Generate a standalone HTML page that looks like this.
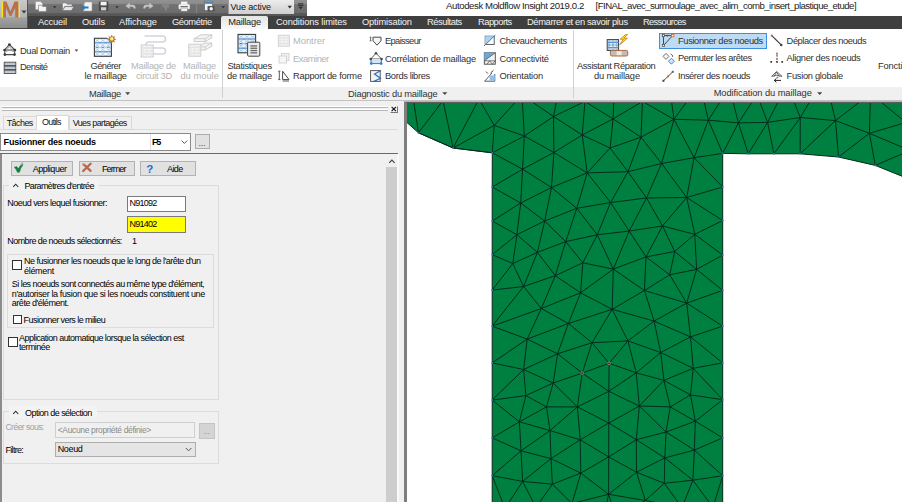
<!DOCTYPE html><html><head><meta charset="utf-8"><title>Autodesk Moldflow Insight</title><style>
html,body{margin:0;padding:0;}body{width:902px;height:502px;position:relative;overflow:hidden;background:#fff;font-family:"Liberation Sans",sans-serif;}
.t{position:absolute;white-space:nowrap;line-height:16px;height:16px;}
</style></head><body>
<div style="position:absolute;left:0px;top:0px;width:902px;height:14px;background:#ffffff;"></div>
<div style="position:absolute;left:28px;top:0px;width:279px;height:16px;background:linear-gradient(#929292 0,#8a8a8a 4px,#727272 4.6px,#6c6c6c 13px,#5a5a5a 13.5px,#555 16px);"></div>
<div style="position:absolute;left:307px;top:0px;width:595px;height:14px;background:#ffffff;"></div>
<div style="position:absolute;left:0px;top:15.5px;width:902px;height:13.3px;background:#3f3f3f;"></div>
<div style="position:absolute;left:0px;top:0px;width:28.4px;height:28.6px;background:linear-gradient(#c8c8c8 0,#b4b4b4 17px,#a2a2a2 17.6px,#8c8c8c 28px);border-right:1px solid #555;border-bottom:1px solid #444;box-sizing:border-box;"></div>
<div style="position:absolute;left:221px;top:16px;width:47px;height:13.2px;background:linear-gradient(#e4e4e4,#f8f8f8);border-radius:2px 2px 0 0;"></div>
<div style="position:absolute;left:227.8px;top:0px;width:65.4px;height:13.9px;background:linear-gradient(#ececec,#cfcfcf);border-left:1px solid #9a9a9a;"></div>
<div style="position:absolute;left:0px;top:28.8px;width:902px;height:58.2px;background:#ffffff;"></div>
<div style="position:absolute;left:0px;top:87px;width:902px;height:13px;background:#f0f0f0;"></div>
<div style="position:absolute;left:0px;top:100px;width:902px;height:1px;background:#c2c2c2;"></div>
<div style="position:absolute;left:221.5px;top:30px;width:1px;height:68px;background:#d0d0d0;"></div>
<div style="position:absolute;left:572.5px;top:30px;width:1px;height:68px;background:#d0d0d0;"></div>
<div style="position:absolute;left:659.3px;top:32.7px;width:107.3px;height:16px;background:#bedbf4;border:1px solid #3f8fe0;box-sizing:border-box;"></div>
<div style="position:absolute;left:0px;top:101px;width:404px;height:401px;background:#f0f0f0;"></div>
<div style="position:absolute;left:403.6px;top:101px;width:0.8px;height:401px;background:#b8b8b8;"></div>
<div style="position:absolute;left:404.2px;top:101px;width:2.8px;height:401px;background:#7e7e7e;"></div>
<div style="position:absolute;left:407px;top:101px;width:495px;height:401px;background:#ffffff;"></div>
<div style="position:absolute;left:404px;top:101px;width:498px;height:1px;background:#b4b4b4;"></div>
<div style="position:absolute;left:405.5px;top:101.7px;width:496.5px;height:1px;background:#5e5e5e;"></div>
<div style="position:absolute;left:1.5px;top:106px;width:386.5px;height:1px;background:#fff;"></div>
<div style="position:absolute;left:1.5px;top:107px;width:386.5px;height:1px;background:#b6b6b6;"></div>
<div style="position:absolute;left:1.5px;top:109.4px;width:386.5px;height:1px;background:#fff;"></div>
<div style="position:absolute;left:1.5px;top:110.4px;width:386.5px;height:1px;background:#b6b6b6;"></div>
<div style="position:absolute;left:390px;top:105.6px;width:8px;height:7.4px;background:#f0f0f0;border-right:1px solid #777;border-bottom:1px solid #777;border-left:1px solid #fff;border-top:1px solid #fff;box-sizing:border-box;"></div>
<div style="position:absolute;left:0px;top:129px;width:398px;height:1px;background:#dcdcdc;"></div>
<div style="position:absolute;left:2.6px;top:116.2px;width:34px;height:14px;background:#f0f0f0;border:1px solid #d9d9d9;box-sizing:border-box;"></div>
<div style="position:absolute;left:69px;top:116.2px;width:62.5px;height:14px;background:#f0f0f0;border:1px solid #d9d9d9;box-sizing:border-box;"></div>
<div style="position:absolute;left:36.2px;top:114.6px;width:33px;height:15.4px;background:#ffffff;border:1px solid #d9d9d9;box-sizing:border-box;border-bottom:none;"></div>
<div style="position:absolute;left:0px;top:133px;width:190.5px;height:17.6px;background:#ffffff;border:1px solid #8a8a8a;box-sizing:border-box;"></div>
<div style="position:absolute;left:150px;top:134px;width:1px;height:15.6px;background:#e0e0e0;"></div>
<div style="position:absolute;left:194.5px;top:134px;width:15px;height:15px;background:#e1e1e1;border:1px solid #adadad;box-sizing:border-box;"></div>
<div style="position:absolute;left:0px;top:153px;width:398px;height:1px;background:#696969;"></div>
<div style="position:absolute;left:0px;top:154px;width:1.6px;height:348px;background:#8c8c8c;"></div>
<div style="position:absolute;left:386px;top:154px;width:12px;height:348px;background:#f0f0f0;"></div>
<div style="position:absolute;left:386px;top:167px;width:11.3px;height:335px;background:#cdcdcd;"></div>
<div style="position:absolute;left:397.3px;top:154px;width:2.2px;height:348px;background:#f9f9f9;"></div>
<div style="position:absolute;left:11px;top:161.3px;width:62.2px;height:14.5px;background:#e1e1e1;border:1px solid #b2b2b2;box-sizing:border-box;"></div>
<div style="position:absolute;left:79.3px;top:161.3px;width:56.2px;height:14.5px;background:#e1e1e1;border:1px solid #b2b2b2;box-sizing:border-box;"></div>
<div style="position:absolute;left:140.2px;top:161.3px;width:56.2px;height:14.5px;background:#e1e1e1;border:1px solid #b2b2b2;box-sizing:border-box;"></div>
<div style="position:absolute;left:3px;top:184.6px;width:216px;height:215px;border:1px solid #dcdcdc;box-sizing:border-box;"></div>
<div style="position:absolute;left:9px;top:179px;width:90px;height:12px;background:#f3f3f3;"></div>
<div style="position:absolute;left:127px;top:195.5px;width:58.5px;height:16px;background:#fff;border:1px solid #7a7a7a;box-sizing:border-box;"></div>
<div style="position:absolute;left:127px;top:216px;width:58.5px;height:17px;background:#ffff00;border:1px solid #7a7a7a;box-sizing:border-box;"></div>
<div style="position:absolute;left:12px;top:260px;width:9.5px;height:9.5px;background:#fff;border:1px solid #333;box-sizing:border-box;"></div>
<div style="position:absolute;left:12.7px;top:314.5px;width:9.5px;height:9.5px;background:#fff;border:1px solid #333;box-sizing:border-box;"></div>
<div style="position:absolute;left:6.8px;top:254.4px;width:206.8px;height:73.4px;border:1px solid #dcdcdc;box-sizing:border-box;"></div>
<div style="position:absolute;left:8px;top:337px;width:9.5px;height:9.5px;background:#fff;border:1px solid #333;box-sizing:border-box;"></div>
<div style="position:absolute;left:3px;top:411.2px;width:216px;height:53.2px;border:1px solid #dcdcdc;box-sizing:border-box;"></div>
<div style="position:absolute;left:9px;top:406px;width:88px;height:12px;background:#f3f3f3;"></div>
<div style="position:absolute;left:55px;top:421.6px;width:139.6px;height:16.4px;background:#f0f0f0;border:1px solid #cfcfcf;box-sizing:border-box;"></div>
<div style="position:absolute;left:199px;top:422.7px;width:15.5px;height:16px;background:#d4d4d4;border:1px solid #c4c4c4;box-sizing:border-box;"></div>
<div style="position:absolute;left:54.5px;top:442px;width:141.5px;height:15px;background:#e5e5e5;border:1px solid #adadad;box-sizing:border-box;"></div>
<svg style="position:absolute;left:407px;top:102.5px" width="495" height="399.5" viewBox="407 102.5 495 399.5">
<path d="M398.0,114.0 L418.5,132.3 L453.1,147.5 L492.3,152.3 L492.2,186.5 L492.2,220.5 L492.2,254.2 L492.2,289.6 L492.2,325.7 L492.2,362.4 L492.2,399.6 L492.2,437.4 L492.2,475.2 L492.2,512.0 L722.7,512.0 L722.7,475.2 L722.7,437.4 L722.7,399.2 L722.7,362.4 L722.7,325.7 L722.7,289.9 L722.7,254.6 L722.7,220.0 L722.7,186.5 L722.7,152.9 L748.3,153.3 L773.9,153.3 L800.1,153.3 L838.5,156.5 L875.3,164.9 L915.0,181.0 L915,90 L398,90 Z" fill="#008040" stroke="#02281a" stroke-width="1.0"/>
<path d="M418.5,132.3L453.1,147.5M453.1,147.5L492.3,152.3M492.3,152.3L494.2,124.9M494.2,124.9L524.3,135.5M494.2,124.9L453.1,147.5M492.3,152.3L524.3,135.5M524.3,135.5L553.5,116.0M524.3,135.5L553.9,152.0M524.3,135.5L522.6,168.7M492.3,152.3L522.6,168.7M522.6,168.7L553.9,152.0M522.6,168.7L492.2,186.5M553.5,116.0L553.9,152.0M418.5,132.3L412.0,90.0M418.5,132.3L443.0,100.0M453.1,147.5L443.0,100.0M453.1,147.5L479.0,98.5M494.2,124.9L479.0,98.5M494.2,124.9L522.0,94.5M524.3,135.5L522.0,94.5M553.5,116.0L522.0,94.5M553.5,116.0L557.5,96.0M553.5,116.0L585.0,101.0M585.0,101.0L582.2,134.5M585.0,101.0L613.1,118.4M613.1,118.4L614.0,95.0M613.1,118.4L642.5,101.0M642.5,101.0L641.0,136.7M642.5,101.0L674.0,118.8M674.0,118.8L671.0,97.0M674.0,118.8L700.0,83.0M708.4,119.7L700.0,83.0M708.4,119.7L729.5,86.5M738.4,122.4L729.5,86.5M738.4,122.4L757.0,94.0M767.6,121.9L757.0,94.0M767.6,121.9L787.0,84.0M800.3,117.0L787.0,84.0M800.3,117.0L825.0,76.0M835.5,120.1L825.0,76.0M835.5,120.1L870.6,93.0M869.4,132.8L870.6,93.0M870.6,93.0L906.0,122.0M869.4,132.8L906.0,122.0M869.4,132.8L910.0,150.0M875.3,164.9L910.0,150.0M553.5,116.0L582.2,134.5M582.2,134.5L613.1,118.4M582.2,134.5L610.1,147.5M582.2,134.5L553.9,152.0M582.2,134.5L587.2,172.4M613.1,118.4L641.0,136.7M613.1,118.4L610.1,147.5M641.0,136.7L610.1,147.5M641.0,136.7L674.0,118.8M641.0,136.7L661.6,163.0M641.0,136.7L628.0,171.2M610.1,147.5L587.2,172.4M610.1,147.5L628.0,171.2M587.2,172.4L628.0,171.2M628.0,171.2L661.6,163.0M661.6,163.0L694.1,157.2M674.0,118.8L694.1,157.2M674.0,118.8L661.6,163.0M553.9,152.0L587.2,172.4M674.0,118.8L708.4,119.7M708.4,119.7L738.4,122.4M738.4,122.4L767.6,121.9M767.6,121.9L800.3,117.0M800.3,117.0L835.5,120.1M708.4,119.7L694.1,157.2M708.4,119.7L722.7,152.9M738.4,122.4L722.7,152.9M738.4,122.4L748.3,153.3M767.6,121.9L748.3,153.3M767.6,121.9L773.9,153.3M800.3,117.0L773.9,153.3M800.3,117.0L800.1,153.3M800.1,153.3L835.5,120.1M694.1,157.2L722.7,152.9M694.1,157.2L722.7,186.5M835.5,120.1L838.5,156.5M835.5,120.1L869.4,132.8M838.5,156.5L869.4,132.8M869.4,132.8L875.3,164.9M522.6,168.7L551.5,187.0M522.6,168.7L520.7,202.5M553.9,152.0L551.5,187.0M551.5,187.0L587.2,172.4M551.5,187.0L520.7,202.5M551.5,187.0L576.8,207.8M551.5,187.0L544.7,220.5M587.2,172.4L576.8,207.8M587.2,172.4L610.6,202.0M628.0,171.2L610.6,202.0M576.8,207.8L610.6,202.0M576.8,207.8L544.7,220.5M576.8,207.8L597.3,234.3M610.6,202.0L597.3,234.3M610.6,202.0L629.2,230.5M492.2,186.5L520.7,202.5M520.7,202.5L492.2,220.5M520.7,202.5L544.7,220.5M520.7,202.5L516.9,234.2M492.2,220.5L516.9,234.2M544.7,220.5L516.9,234.2M628.0,171.2L646.5,197.5M661.6,163.0L646.5,197.5M661.6,163.0L686.7,197.0M694.1,157.2L686.7,197.0M686.7,197.0L722.7,186.5M610.6,202.0L646.5,197.5M646.5,197.5L686.7,197.0M646.5,197.5L629.2,230.5M646.5,197.5L662.5,225.5M686.7,197.0L662.5,225.5M686.7,197.0L722.7,220.0M686.7,197.0L694.8,233.8M662.5,225.5L694.8,233.8M694.8,233.8L722.7,220.0M629.2,230.5L662.5,225.5M597.3,234.3L629.2,230.5M516.9,234.2L492.2,254.2M516.9,234.2L512.8,263.0M516.9,234.2L537.4,251.9M492.2,254.2L512.8,263.0M512.8,263.0L537.4,251.9M512.8,263.0L523.6,286.0M512.8,263.0L492.2,289.6M537.4,251.9L565.7,241.1M537.4,251.9L555.3,275.2M537.4,251.9L523.6,286.0M544.7,220.5L537.4,251.9M544.7,220.5L565.7,241.1M565.7,241.1L576.8,207.8M565.7,241.1L597.3,234.3M565.7,241.1L582.8,262.3M565.7,241.1L555.3,275.2M597.3,234.3L582.8,262.3M597.3,234.3L613.3,268.6M629.2,230.5L613.3,268.6M582.8,262.3L555.3,275.2M582.8,262.3L613.3,268.6M582.8,262.3L580.6,292.3M613.3,268.6L580.6,292.3M613.3,268.6L612.2,308.8M613.3,268.6L644.4,290.0M555.3,275.2L580.6,292.3M555.3,275.2L523.6,286.0M555.3,275.2L541.3,308.0M523.6,286.0L492.2,289.6M523.6,286.0L541.3,308.0M580.6,292.3L541.3,308.0M580.6,292.3L612.2,308.8M629.2,230.5L646.0,256.4M662.5,225.5L646.0,256.4M662.5,225.5L674.7,251.0M694.8,233.8L674.7,251.0M694.8,233.8L722.7,254.6M694.8,233.8L696.6,268.9M646.0,256.4L674.7,251.0M674.7,251.0L696.6,268.9M674.7,251.0L669.7,274.3M646.0,256.4L669.7,274.3M646.0,256.4L613.3,268.6M646.0,256.4L644.4,290.0M669.7,274.3L644.4,290.0M669.7,274.3L696.6,268.9M669.7,274.3L686.7,302.6M696.6,268.9L722.7,254.6M696.6,268.9L722.7,289.9M696.6,268.9L686.7,302.6M686.7,302.6L722.7,289.9M686.7,302.6L644.4,290.0M644.4,290.0L612.2,308.8M541.3,308.0L492.2,325.7M541.3,308.0L568.4,323.0M541.3,308.0L527.2,338.6M612.2,308.8L568.4,323.0M612.2,308.8L592.0,342.2M612.2,308.8L627.9,340.4M492.2,325.7L527.2,338.6M568.4,323.0L527.2,338.6M568.4,323.0L592.0,342.2M568.4,323.0L557.6,353.3M527.2,338.6L557.6,353.3M527.2,338.6L492.2,362.4M527.2,338.6L523.6,369.0M592.0,342.2L627.9,340.4M592.0,342.2L557.6,353.3M592.0,342.2L609.1,362.8M592.0,342.2L582.2,372.6M627.9,340.4L609.1,362.8M627.9,340.4L636.2,372.3M557.6,353.3L523.6,369.0M557.6,353.3L582.2,372.6M557.6,353.3L553.2,382.5M492.2,362.4L523.6,369.0M609.1,362.8L582.2,372.6M609.1,362.8L636.2,372.3M523.6,369.0L553.2,382.5M582.2,372.6L553.2,382.5M523.6,286.0L492.2,325.7M580.6,292.3L568.4,323.0M612.2,308.8L654.1,320.6M686.7,302.6L654.1,320.6M686.7,302.6L722.7,325.7M686.7,302.6L690.5,336.4M654.1,320.6L690.5,336.4M654.1,320.6L660.7,352.0M654.1,320.6L627.9,340.4M644.4,290.0L654.1,320.6M690.5,336.4L722.7,325.7M690.5,336.4L660.7,352.0M690.5,336.4L722.7,362.4M690.5,336.4L693.2,367.8M660.7,352.0L627.9,340.4M660.7,352.0L636.2,372.3M660.7,352.0L693.2,367.8M660.7,352.0L663.9,379.9M636.2,372.3L663.9,379.9M693.2,367.8L722.7,362.4M693.2,367.8L663.9,379.9M553.2,382.5L525.9,395.1M553.2,382.5L546.5,406.4M553.2,382.5L577.4,406.4M492.2,399.6L525.9,395.1M492.2,399.6L519.4,421.3M523.6,369.0L492.2,399.6M523.6,369.0L525.9,395.1M525.9,395.1L546.5,406.4M525.9,395.1L519.4,421.3M546.5,406.4L577.4,406.4M546.5,406.4L519.4,421.3M546.5,406.4L550.0,430.1M577.4,406.4L550.0,430.1M577.4,406.4L608.8,390.8M577.4,406.4L608.8,422.5M577.4,406.4L580.2,439.3M582.2,372.6L577.4,406.4M609.1,362.8L608.8,390.8M582.2,372.6L608.8,390.8M636.2,372.3L608.8,390.8M608.8,390.8L639.3,405.5M608.8,390.8L608.8,422.5M639.3,405.5L608.8,422.5M639.3,405.5L636.3,439.2M636.2,372.3L639.3,405.5M519.4,421.3L550.0,430.1M519.4,421.3L492.2,437.4M519.4,421.3L521.0,450.3M550.0,430.1L580.2,439.3M550.0,430.1L521.0,450.3M550.0,430.1L551.0,458.1M608.8,422.5L580.2,439.3M608.8,422.5L636.3,439.2M608.8,422.5L608.7,456.4M492.2,437.4L521.0,450.3M580.2,439.3L551.0,458.1M580.2,439.3L608.7,456.4M636.3,439.2L608.7,456.4M521.0,450.3L551.0,458.1M663.9,379.9L639.3,405.5M663.9,379.9L670.2,406.4M663.9,379.9L690.5,394.4M690.5,394.4L670.2,406.4M690.5,394.4L722.7,399.2M690.5,394.4L695.3,420.7M693.2,367.8L690.5,394.4M693.2,367.8L722.7,399.2M639.3,405.5L670.2,406.4M639.3,405.5L666.1,431.5M670.2,406.4L695.3,420.7M670.2,406.4L666.1,431.5M695.3,420.7L722.7,399.2M695.3,420.7L666.1,431.5M695.3,420.7L722.7,437.4M695.3,420.7L694.4,449.6M666.1,431.5L636.3,439.2M666.1,431.5L694.4,449.6M666.1,431.5L664.8,457.4M636.3,439.2L664.8,457.4M694.4,449.6L722.7,437.4M694.4,449.6L664.8,457.4M521.0,450.3L492.2,475.2M521.0,450.3L522.6,480.9M551.0,458.1L522.6,480.9M551.0,458.1L552.4,483.7M551.0,458.1L580.8,472.6M580.2,439.3L580.8,472.6M608.7,456.4L580.8,472.6M608.7,456.4L608.6,493.8M608.7,456.4L636.5,471.7M636.3,439.2L636.5,471.7M492.2,475.2L522.6,480.9M522.6,480.9L552.4,483.7M552.4,483.7L580.8,472.6M580.8,472.6L608.6,493.8M636.5,471.7L608.6,493.8M694.4,449.6L722.7,475.2M694.4,449.6L692.9,479.7M664.8,457.4L692.9,479.7M664.8,457.4L664.3,482.8M664.8,457.4L636.5,471.7M636.5,471.7L664.3,482.8M636.5,471.7L645.3,500.0M664.3,482.8L692.9,479.7M664.3,482.8L645.3,500.0M692.9,479.7L722.7,475.2M608.6,493.8L645.3,500.0M522.6,480.9L505.0,508.0M492.2,475.2L505.0,508.0M522.6,480.9L536.0,507.0M552.4,483.7L536.0,507.0M552.4,483.7L572.0,503.0M580.8,472.6L572.0,503.0M608.6,493.8L572.0,503.0M608.6,493.8L603.0,520.0M608.6,493.8L617.0,520.0M645.3,500.0L617.0,520.0M664.3,482.8L682.0,507.0M692.9,479.7L682.0,507.0M692.9,479.7L713.0,507.0M722.7,475.2L713.0,507.0M645.3,500.0L682.0,507.0" fill="none" stroke="#02281a" stroke-width="0.95"/>
<g fill="#2a86c8" opacity="0.8"><circle cx="418.5" cy="132.3" r="1.1"/><circle cx="453.1" cy="147.5" r="1.1"/><circle cx="492.3" cy="152.3" r="1.1"/><circle cx="492.2" cy="186.5" r="1.1"/><circle cx="492.2" cy="220.5" r="1.1"/><circle cx="492.2" cy="254.2" r="1.1"/><circle cx="492.2" cy="289.6" r="1.1"/><circle cx="492.2" cy="325.7" r="1.1"/><circle cx="492.2" cy="362.4" r="1.1"/><circle cx="492.2" cy="399.6" r="1.1"/><circle cx="492.2" cy="437.4" r="1.1"/><circle cx="492.2" cy="475.2" r="1.1"/><circle cx="722.7" cy="475.2" r="1.1"/><circle cx="722.7" cy="437.4" r="1.1"/><circle cx="722.7" cy="399.2" r="1.1"/><circle cx="722.7" cy="362.4" r="1.1"/><circle cx="722.7" cy="325.7" r="1.1"/><circle cx="722.7" cy="289.9" r="1.1"/><circle cx="722.7" cy="254.6" r="1.1"/><circle cx="722.7" cy="220.0" r="1.1"/><circle cx="722.7" cy="186.5" r="1.1"/><circle cx="722.7" cy="152.9" r="1.1"/><circle cx="748.3" cy="153.3" r="1.1"/><circle cx="773.9" cy="153.3" r="1.1"/><circle cx="800.1" cy="153.3" r="1.1"/><circle cx="838.5" cy="156.5" r="1.1"/><circle cx="875.3" cy="164.9" r="1.1"/></g>
<circle cx="609.1" cy="362.8" r="1.3" fill="none" stroke="#e08a8a" stroke-width="0.7"/>
<circle cx="582.2" cy="372.6" r="1.3" fill="none" stroke="#e08a8a" stroke-width="0.7"/>
</svg>
<svg style="position:absolute;left:0;top:0" width="902" height="502" viewBox="0 0 902 502">
<path d="M3.2,1.5 L6.5,1.5 L10.5,11.5 L14.5,1.5 L18.5,1.5 L18.5,17.5 L15.2,17.5 L15.2,8 L11.3,16 L9.7,16 L6,8 L6,17.5 L3.2,17.5 Z" fill="#b87052"/>
<path d="M2.3,1.5 L2.3,17.5 M19.3,1.5 L19.3,17.5" stroke="#ffe800" stroke-width="1.3"/>
<path d="M21.5,10.5 L26.5,10.5 L24,13.5 Z" fill="#3a3a3a"/>
<path d="M35.5,1.5 h5 l2,2 v6 h-7 Z" fill="#f2f2f2" stroke="#999" stroke-width="0.5"/>
<path d="M38.5,5.2 h3 l1,1.2 h3.8 v5.2 h-7.8 Z" fill="#f2f2f2" stroke="#777" stroke-width="0.6"/>
<path d="M52.8,6.2 h3.6 l-1.8,2 Z" fill="#2e2e2e"/>
<path d="M62.5,3 h3.5 l1,1.2 h5 v2 h-7.2 l-2.3,4.3 Z" fill="#f2f2f2" stroke="#777" stroke-width="0.5"/>
<path d="M65,6.6 h9 l-2.6,4 h-9 Z" fill="#dfe6ee" stroke="#666" stroke-width="0.6"/>
<path d="M85,2 h7 v9 h-8.5 v-5.5 Z" fill="#f2f2f2" stroke="#999" stroke-width="0.5"/>
<path d="M81.2,7.5 l3.3,-2.6 v1.7 h4 v1.9 h-4 v1.7 Z" fill="#1f78c8"/>
<rect x="98.8" y="1.5" width="9.6" height="9.6" rx="1" fill="#4a4a4a"/>
<rect x="100.6" y="1.8" width="6" height="3.6" fill="#f2f2f2"/><rect x="101" y="7.2" width="5.2" height="3.2" fill="#d0d0d0"/>
<path d="M115.2,6.2 h3.6 l-1.8,2 Z" fill="#2e2e2e"/>
<path d="M125.5,6 l4.2,-3.2 v2 h3 q3,0 3,3.8 h-2 q0,-1.8 -1.6,-1.8 h-2.4 v2.2 Z" fill="#c4c4c4"/>
<path d="M153.5,6 l-4.2,-3.2 v2 h-3 q-3,0 -3,3.8 h2 q0,-1.8 1.6,-1.8 h2.4 v2.2 Z" fill="#c4c4c4"/>
<path d="M161.5,5.5 l3.5,-3 v2 h4 v3 h-2 v3 h-2 v-4 h-0.5 v2 Z" fill="#868686"/>
<rect x="181" y="1.6" width="6.4" height="3" fill="#f2f2f2"/><rect x="178.6" y="4.2" width="11.2" height="5" rx="1.2" fill="#f2f2f2"/><rect x="181" y="8" width="6.4" height="3.2" fill="#f2f2f2" stroke="#777" stroke-width="0.5"/><rect x="180.5" y="6.2" width="7.4" height="0.9" fill="#555"/>
<rect x="196.3" y="4" width="0.8" height="9.5" fill="#8e8e8e"/>
<rect x="204.5" y="1.2" width="8" height="9.5" fill="#f2f2f2" stroke="#555" stroke-width="0.6"/><rect x="205" y="1.8" width="7" height="2" fill="#3b86d0"/>
<rect x="207.5" y="6" width="7.2" height="5.4" rx="0.8" fill="#555"/><circle cx="211.2" cy="8.8" r="1.7" fill="#f2f2f2"/>
<path d="M221.4,6.2 h3.6 l-1.8,2 Z" fill="#2e2e2e"/>
<path d="M287.6,5.8 h4.4 l-2.2,2.6 Z" fill="#333"/>
<path d="M298,3.8 h5.4 M298,5.4 h5.4" stroke="#2a2a2a" stroke-width="0.9"/><path d="M298.4,6.8 h4.6 l-2.3,2.5 Z" fill="#2a2a2a"/>
<path d="M74.6,49.6 h3.6 l-1.8,2.1 Z" fill="#444"/>
<path d="M125.2,92.2 h5 l-2.5,2.8 Z" fill="#444"/>
<path d="M442.3,92.2 h5 l-2.5,2.8 Z" fill="#444"/>
<path d="M817.2,92.2 h5 l-2.5,2.8 Z" fill="#444"/>
<path d="M9.4,44.6 L4.6,50 L14.9,50 Z M4.6,50 L4.9,54.6 L14.5,54.6 L14.9,50" fill="none" stroke="#4a4a4a" stroke-width="1.1"/>
<path d="M5.5,51.6 q4.2,-3 8.6,0 M6.6,50 l2.8,-3.4 l2.8,3.4" fill="none" stroke="#8a8a8a" stroke-width="0.8"/>
<circle cx="9.4" cy="44.6" r="1.35" fill="#3a3a3a"/>
<circle cx="4.6" cy="50" r="1.35" fill="#3a3a3a"/>
<circle cx="14.9" cy="50" r="1.35" fill="#3a3a3a"/>
<circle cx="4.9" cy="54.6" r="1.35" fill="#3a3a3a"/>
<circle cx="14.5" cy="54.6" r="1.35" fill="#3a3a3a"/>
<rect x="4.2" y="62.2" width="11.6" height="3.3" fill="#cfdbe6" stroke="#4a4a4a" stroke-width="0.9"/>
<path d="M5,63.900000000000006 h10" stroke="#7c8894" stroke-width="0.7" stroke-dasharray="1.3,0.9"/>
<rect x="4.2" y="66.2" width="11.6" height="3.3" fill="#cfdbe6" stroke="#4a4a4a" stroke-width="0.9"/>
<path d="M5,67.9 h10" stroke="#7c8894" stroke-width="0.7" stroke-dasharray="1.3,0.9"/>
<rect x="4.2" y="70.2" width="11.6" height="3.3" fill="#cfdbe6" stroke="#4a4a4a" stroke-width="0.9"/>
<path d="M5,71.9 h10" stroke="#7c8894" stroke-width="0.7" stroke-dasharray="1.3,0.9"/>
<rect x="94.4" y="38.3" width="17" height="18" fill="#f4f8fc" stroke="#3a3a3a" stroke-width="1.1"/>
<path d="M94.4,38.3L100.1,42.8M100.1,38.3L94.4,42.8M100.1,38.3L105.7,42.8M105.7,38.3L100.1,42.8M105.7,38.3L111.4,42.8M111.4,38.3L105.7,42.8M94.4,42.8L100.1,47.3M100.1,42.8L94.4,47.3M100.1,42.8L105.7,47.3M105.7,42.8L100.1,47.3M105.7,42.8L111.4,47.3M111.4,42.8L105.7,47.3M94.4,47.3L100.1,51.8M100.1,47.3L94.4,51.8M100.1,47.3L105.7,51.8M105.7,47.3L100.1,51.8M105.7,47.3L111.4,51.8M111.4,47.3L105.7,51.8M94.4,51.8L100.1,56.3M100.1,51.8L94.4,56.3M100.1,51.8L105.7,56.3M105.7,51.8L100.1,56.3M105.7,51.8L111.4,56.3M111.4,51.8L105.7,56.3" stroke="#3b7fc4" stroke-width="0.5" opacity="0.55" fill="none"/>
<path d="M94.4,42.8 h17" stroke="#3b7fc4" stroke-width="0.95"/>
<path d="M94.4,47.3 h17" stroke="#3b7fc4" stroke-width="1.1" stroke-dasharray="2.8,2.8" stroke-dashoffset="-1.4"/>
<path d="M94.4,51.8 h17" stroke="#3b7fc4" stroke-width="0.95"/>
<path d="M106.5,37 h6.5 v6.5 Z" fill="#fff"/>
<path d="M111.8,34.6 l1,2.3 2.3,-1 -1,2.3 2.3,1 -2.3,1 1,2.3 -2.3,-1 -1,2.3 -1,-2.3 -2.3,1 1,-2.3 -2.3,-1 2.3,-1 -1,-2.3 2.3,1 Z" fill="#b96a1e"/>
<circle cx="111.8" cy="38.9" r="1.8" fill="#fff03a"/><circle cx="112.3" cy="38.9" r="0.7" fill="#fff"/>
<path d="M144.5,36 h18 q3,0 3,3 t-3,3 h-14 q-2.5,0 -2.5,3 t2.5,3 h14 q3,0 3,3 t-3,3 h-10" fill="none" stroke="#d2d5da" stroke-width="1.6"/>
<rect x="141.2" y="45" width="12" height="12" fill="#f6f6f6" stroke="#c9c9c9" stroke-width="0.9"/>
<path d="M141.2,45.0L145.2,48.0M145.2,45.0L141.2,48.0M145.2,45.0L149.2,48.0M149.2,45.0L145.2,48.0M149.2,45.0L153.2,48.0M153.2,45.0L149.2,48.0M141.2,48.0L145.2,51.0M145.2,48.0L141.2,51.0M145.2,48.0L149.2,51.0M149.2,48.0L145.2,51.0M149.2,48.0L153.2,51.0M153.2,48.0L149.2,51.0M141.2,51.0L145.2,54.0M145.2,51.0L141.2,54.0M145.2,51.0L149.2,54.0M149.2,51.0L145.2,54.0M149.2,51.0L153.2,54.0M153.2,51.0L149.2,54.0M141.2,54.0L145.2,57.0M145.2,54.0L141.2,57.0M145.2,54.0L149.2,57.0M149.2,54.0L145.2,57.0M149.2,54.0L153.2,57.0M153.2,54.0L149.2,57.0" stroke="#dcdcdc" stroke-width="0.5" opacity="0.55" fill="none"/>
<path d="M141.2,48.0 h12" stroke="#dcdcdc" stroke-width="0.95"/>
<path d="M141.2,51.0 h12" stroke="#dcdcdc" stroke-width="1.1" stroke-dasharray="2.0,2.0" stroke-dashoffset="-1.0"/>
<path d="M141.2,54.0 h12" stroke="#dcdcdc" stroke-width="0.95"/>
<path d="M194.2,38.6 l6.6,-3.8 h11 v3 l-6.6,3.8 h-11 Z" fill="#f3f3f3" stroke="#c6c6c6" stroke-width="0.9"/><path d="M194.2,38.6 h11 l6.6,-3.8 M205.2,38.6 v3" fill="none" stroke="#c6c6c6" stroke-width="0.8"/>
<path d="M198,46.8 l6.6,-3.8 h7.2 v3.2 l-6.6,3.8 h-7.2 Z" fill="#f3f3f3" stroke="#c6c6c6" stroke-width="0.9"/><path d="M198,46.8 h7.2 l6.6,-3.8 M205.2,46.8 v3.2" fill="none" stroke="#c6c6c6" stroke-width="0.8"/>
<rect x="188.8" y="44.2" width="12" height="12" fill="#f6f6f6" stroke="#c9c9c9" stroke-width="0.9"/>
<path d="M188.8,44.2L192.8,47.2M192.8,44.2L188.8,47.2M192.8,44.2L196.8,47.2M196.8,44.2L192.8,47.2M196.8,44.2L200.8,47.2M200.8,44.2L196.8,47.2M188.8,47.2L192.8,50.2M192.8,47.2L188.8,50.2M192.8,47.2L196.8,50.2M196.8,47.2L192.8,50.2M196.8,47.2L200.8,50.2M200.8,47.2L196.8,50.2M188.8,50.2L192.8,53.2M192.8,50.2L188.8,53.2M192.8,50.2L196.8,53.2M196.8,50.2L192.8,53.2M196.8,50.2L200.8,53.2M200.8,50.2L196.8,53.2M188.8,53.2L192.8,56.2M192.8,53.2L188.8,56.2M192.8,53.2L196.8,56.2M196.8,53.2L192.8,56.2M196.8,53.2L200.8,56.2M200.8,53.2L196.8,56.2" stroke="#dcdcdc" stroke-width="0.5" opacity="0.55" fill="none"/>
<path d="M188.8,47.2 h12" stroke="#dcdcdc" stroke-width="0.95"/>
<path d="M188.8,50.2 h12" stroke="#dcdcdc" stroke-width="1.1" stroke-dasharray="2.0,2.0" stroke-dashoffset="-1.0"/>
<path d="M188.8,53.2 h12" stroke="#dcdcdc" stroke-width="0.95"/>
<rect x="238" y="34.4" width="17.6" height="18.4" fill="#eaf2fa" stroke="#3a3a3a" stroke-width="1.1"/>
<path d="M238.0,34.4L243.9,39.0M243.9,34.4L238.0,39.0M243.9,34.4L249.7,39.0M249.7,34.4L243.9,39.0M249.7,34.4L255.6,39.0M255.6,34.4L249.7,39.0M238.0,39.0L243.9,43.6M243.9,39.0L238.0,43.6M243.9,39.0L249.7,43.6M249.7,39.0L243.9,43.6M249.7,39.0L255.6,43.6M255.6,39.0L249.7,43.6M238.0,43.6L243.9,48.2M243.9,43.6L238.0,48.2M243.9,43.6L249.7,48.2M249.7,43.6L243.9,48.2M249.7,43.6L255.6,48.2M255.6,43.6L249.7,48.2M238.0,48.2L243.9,52.8M243.9,48.2L238.0,52.8M243.9,48.2L249.7,52.8M249.7,48.2L243.9,52.8M249.7,48.2L255.6,52.8M255.6,48.2L249.7,52.8" stroke="#3b7fc4" stroke-width="0.5" opacity="0.55" fill="none"/>
<path d="M238,39.0 h17.6" stroke="#3b7fc4" stroke-width="0.95"/>
<path d="M238,43.6 h17.6" stroke="#3b7fc4" stroke-width="1.1" stroke-dasharray="2.9,2.9" stroke-dashoffset="-1.5"/>
<path d="M238,48.2 h17.6" stroke="#3b7fc4" stroke-width="0.95"/>
<rect x="247.6" y="42.2" width="12.2" height="14" rx="1" fill="#ececec" stroke="#444" stroke-width="1"/>
<rect x="250.4" y="45.3" width="6.8" height="1.3" fill="#6a6a6a"/>
<rect x="250.4" y="47.6" width="6.8" height="1.3" fill="#6a6a6a"/>
<rect x="250.4" y="49.9" width="6.8" height="1.3" fill="#6a6a6a"/>
<rect x="250.4" y="52.2" width="6.8" height="1.3" fill="#6a6a6a"/>
<rect x="278.3" y="35.2" width="11" height="11" fill="#f5f5f5" stroke="#cdcdcd" stroke-width="0.9"/>
<path d="M278.3,35.2L282.0,38.0M282.0,35.2L278.3,38.0M282.0,35.2L285.6,38.0M285.6,35.2L282.0,38.0M285.6,35.2L289.3,38.0M289.3,35.2L285.6,38.0M278.3,38.0L282.0,40.7M282.0,38.0L278.3,40.7M282.0,38.0L285.6,40.7M285.6,38.0L282.0,40.7M285.6,38.0L289.3,40.7M289.3,38.0L285.6,40.7M278.3,40.7L282.0,43.5M282.0,40.7L278.3,43.5M282.0,40.7L285.6,43.5M285.6,40.7L282.0,43.5M285.6,40.7L289.3,43.5M289.3,40.7L285.6,43.5M278.3,43.5L282.0,46.2M282.0,43.5L278.3,46.2M282.0,43.5L285.6,46.2M285.6,43.5L282.0,46.2M285.6,43.5L289.3,46.2M289.3,43.5L285.6,46.2" stroke="#dedede" stroke-width="0.5" opacity="0.55" fill="none"/>
<path d="M278.3,38.0 h11" stroke="#dedede" stroke-width="0.95"/>
<path d="M278.3,40.7 h11" stroke="#dedede" stroke-width="1.1" stroke-dasharray="1.8,1.8" stroke-dashoffset="-0.9"/>
<path d="M278.3,43.5 h11" stroke="#dedede" stroke-width="0.95"/>
<rect x="281.5" y="53.6" width="7.5" height="7" fill="#f2f2f2" stroke="#d0d0d0" stroke-width="0.9"/><rect x="279" y="56" width="7.5" height="7" fill="#f6f6f6" stroke="#d0d0d0" stroke-width="0.9"/>
<path d="M282.6,71.2 L289,79.6 L282.6,79.6 Z" fill="none" stroke="#4a4a4a" stroke-width="1"/><path d="M279.3,71.2 v8.4 M278.2,71.2 h2.2 M278.2,79.6 h2.2 M282.6,81 h6.4" stroke="#4a4a4a" stroke-width="0.9"/>
<path d="M373,37.2 h8 v3.6 l-4,4.4 l-4,-4.4 Z" fill="#f4f4f4" stroke="#4a4a4a" stroke-width="1"/><path d="M370.6,37.2 v3.6 M369.7,37.2 h1.8 M369.7,40.8 h1.8" stroke="#4a4a4a" stroke-width="0.8"/>
<path d="M376,53.2 L370.8,59 L381.6,59 Z" fill="none" stroke="#4a4a4a" stroke-width="0.9"/>
<path d="M370.8,59 L371.2,63.6 L381.2,63.6 L381.6,59" fill="#cfe4f7" stroke="#2a7fd0" stroke-width="1"/>
<circle cx="376" cy="53.2" r="1.3" fill="#4a4a4a"/>
<circle cx="370.8" cy="59" r="1.3" fill="#4a4a4a"/>
<circle cx="381.6" cy="59" r="1.3" fill="#4a4a4a"/>
<circle cx="371.2" cy="63.6" r="1.3" fill="#2a7fd0"/>
<circle cx="381.2" cy="63.6" r="1.3" fill="#2a7fd0"/>
<rect x="370.6" y="70.6" width="9.6" height="10.8" fill="#eef3f8" stroke="#4a4a4a" stroke-width="0.9"/>
<path d="M381,70.4 l-6.5,3.6 l6,4.2 l-7,3.4" fill="none" stroke="#2a6fb8" stroke-width="1.2"/>
<rect x="485.2" y="36.2" width="9" height="8.2" fill="#fff" stroke="#4a4a4a" stroke-width="0.9"/><path d="M485.2,36.2 h9 l-9,8.2 Z" fill="#a9d2f3"/>
<path d="M484,46 L495.4,35" stroke="#2a7fd0" stroke-width="1"/>
<rect x="484.3" y="52.8" width="11" height="11.4" fill="#f2f2f2" stroke="#4a4a4a" stroke-width="0.9"/><path d="M484.3,52.8 h11 l-11,8 Z" fill="#6aa8dc"/>
<path d="M484.3,60.8 L495.3,52.8 M484.3,60.8 h11 M487,64.2 l2.7,-3.4 l2.7,3.4 l2.7,-3.4" fill="none" stroke="#4a4a4a" stroke-width="0.7"/>
<path d="M484.6,81.2 L494.8,81.2 L494.8,74 M484.6,81.2 L492,73" fill="none" stroke="#4a4a4a" stroke-width="0.9"/><rect x="489.6" y="75.4" width="5.2" height="5.2" fill="#8cc0ee"/>
<path d="M486,71.6 l2,2 M490.5,73 l3,-2.6" stroke="#333" stroke-width="0.9"/>
<rect x="607.2" y="39.6" width="11.4" height="10.8" fill="#eaf2fa" stroke="#3a3a3a" stroke-width="1.0"/>
<path d="M607.2,39.6L611.0,42.3M611.0,39.6L607.2,42.3M611.0,39.6L614.8,42.3M614.8,39.6L611.0,42.3M614.8,39.6L618.6,42.3M618.6,39.6L614.8,42.3M607.2,42.3L611.0,45.0M611.0,42.3L607.2,45.0M611.0,42.3L614.8,45.0M614.8,42.3L611.0,45.0M614.8,42.3L618.6,45.0M618.6,42.3L614.8,45.0M607.2,45.0L611.0,47.7M611.0,45.0L607.2,47.7M611.0,45.0L614.8,47.7M614.8,45.0L611.0,47.7M614.8,45.0L618.6,47.7M618.6,45.0L614.8,47.7M607.2,47.7L611.0,50.4M611.0,47.7L607.2,50.4M611.0,47.7L614.8,50.4M614.8,47.7L611.0,50.4M614.8,47.7L618.6,50.4M618.6,47.7L614.8,50.4" stroke="#3b7fc4" stroke-width="0.5" opacity="0.55" fill="none"/>
<path d="M607.2,42.3 h11.4" stroke="#3b7fc4" stroke-width="0.95"/>
<path d="M607.2,45.0 h11.4" stroke="#3b7fc4" stroke-width="1.1" stroke-dasharray="1.9,1.9" stroke-dashoffset="-1.0"/>
<path d="M607.2,47.7 h11.4" stroke="#3b7fc4" stroke-width="0.95"/>
<path d="M625.6,34.6 l-5.4,4.6 h3.2 l-3.6,5.6 l7.6,-6.6 h-3.4 l3.6,-3.6 Z" fill="#ffe400" stroke="#b46a20" stroke-width="0.7"/>
<rect x="610.4" y="50.4" width="17.4" height="5.6" rx="1.6" fill="#bdbdbd" stroke="#b06a3a" stroke-width="1"/><rect x="616.6" y="51.2" width="5" height="4" fill="#f1ead8"/>
<path d="M666,53.4 l3,3 l-3,3 l-3,-3 Z" fill="#f4f4f4" stroke="#4a4a4a" stroke-width="0.8"/><path d="M671.4,58.2 l3,3 l-3,3 l-3,-3 Z" fill="#cfe4f7" stroke="#2a7fd0" stroke-width="0.9"/>
<path d="M670.5,54 q2.6,0.6 2.2,3" fill="none" stroke="#4a4a4a" stroke-width="0.8"/>
<path d="M663.4,80.8 L672.8,71.8" stroke="#4a4a4a" stroke-width="1"/><rect x="662.4" y="79.8" width="2" height="2" fill="#4a4a4a"/><rect x="671.8" y="70.8" width="2" height="2" fill="#666"/><circle cx="668.1" cy="76.3" r="1.1" fill="#d2622a"/>
<path d="M771.8,35.6 L781.4,45.2" stroke="#333" stroke-width="1.1"/><circle cx="771.8" cy="35.6" r="1.1" fill="#d2622a"/><circle cx="781.2" cy="45" r="1.3" fill="#444"/>
<path d="M777,54.5 v6" stroke="#333" stroke-width="1" stroke-dasharray="2.2,1.2"/><circle cx="777" cy="53.4" r="1" fill="#d2622a"/>
<rect x="770.3000000000001" y="61" width="1.8" height="1.8" fill="#444"/>
<rect x="776.1" y="61" width="1.8" height="1.8" fill="#444"/>
<rect x="781.3000000000001" y="61" width="1.8" height="1.8" fill="#444"/>
<path d="M771.6,76.4 L776.6,71.4 L782,76.4 M774,76.6 L776.6,72 L779.4,76.6 M771.6,76.4 q5.2,-2.4 10.4,0" fill="none" stroke="#4a4a4a" stroke-width="0.8"/>
<path d="M781,80.4 h-6.6 M776.4,78.6 l-2.2,1.8 l2.2,1.8" fill="none" stroke="#222" stroke-width="1"/><circle cx="777.4" cy="77.4" r="0.9" fill="#d2622a"/>
<path d="M663.4,35.6 H672.6 L663.6,45.4 Z" fill="none" stroke="#333" stroke-width="0.9"/>
<rect x="662.3" y="34.5" width="2.2" height="2.2" fill="#fff" stroke="#333" stroke-width="0.6"/><rect x="662.5" y="44.3" width="2.2" height="2.2" fill="#fff" stroke="#333" stroke-width="0.6"/><rect x="671.5" y="34.4" width="2.4" height="2.4" fill="#fff" stroke="#d2622a" stroke-width="0.8"/><rect x="666.6" y="34.8" width="1.6" height="1.6" fill="#444"/>
<path d="M391.6,106.8 l4.4,4.4 M396,106.8 l-4.4,4.4" stroke="#111" stroke-width="1.1"/>
<path d="M389.2,162.8 l2.7,-2.8 l2.7,2.8" fill="none" stroke="#444" stroke-width="1.2"/>
<path d="M181.6,140.6 l2.8,2.8 l2.8,-2.8" fill="none" stroke="#444" stroke-width="0.9"/>
<path d="M185.8,448 l2.8,2.8 l2.8,-2.8" fill="none" stroke="#444" stroke-width="0.9"/>
<path d="M13.2,186.8 l2.5,-2.6 l2.5,2.6" fill="none" stroke="#333" stroke-width="1.1"/>
<path d="M13.2,413.8 l2.5,-2.6 l2.5,2.6" fill="none" stroke="#333" stroke-width="1.1"/>
<path d="M14.4,167.2 l2.2,-0.6 l1.8,2.2 q1.4,-3 3.4,-4.6 l1.2,0.6 q-2.6,3.2 -3.6,7.4 h-2 q-1,-2.8 -3,-5 Z" fill="#15803a" stroke="#15803a" stroke-width="0.6" stroke-linejoin="round"/>
<path d="M20.8,164.8 l1.8,-1.8" stroke="#b0b0b0" stroke-width="1.5" stroke-linecap="round"/>
<path d="M83.4,164.2 l7.2,6.6 M90.6,163.8 l-7.4,7.2" stroke="#b4694a" stroke-width="2.3" stroke-linecap="round"/>
<path d="M83,163.4 l1.4,1" stroke="#d8d0c0" stroke-width="1" />
</svg>
<span class="t" style="left:230.5px;top:-1.2px;font-size:9px;color:#111;letter-spacing:-0.13px;">Vue active</span>
<span class="t" style="left:446.0px;top:-1.7px;font-size:9.6px;color:#222;letter-spacing:-0.40px;">Autodesk Moldflow Insight 2019.0.2</span>
<span class="t" style="left:595.6px;top:-1.7px;font-size:9.6px;color:#222;letter-spacing:-0.53px;">[FINAL_avec_surmoulage_avec_alim_comb_insert_plastique_etude]</span>
<span class="t" style="left:38.0px;top:13.7px;font-size:9.3px;color:#f4f4f4;letter-spacing:-0.15px;">Accueil</span>
<span class="t" style="left:82.0px;top:13.7px;font-size:9.3px;color:#f4f4f4;letter-spacing:-0.14px;">Outils</span>
<span class="t" style="left:119.0px;top:13.7px;font-size:9.3px;color:#f4f4f4;letter-spacing:-0.07px;">Affichage</span>
<span class="t" style="left:172.0px;top:13.7px;font-size:9.3px;color:#f4f4f4;letter-spacing:-0.40px;">Géométrie</span>
<span class="t" style="left:228.3px;top:13.7px;font-size:9.3px;color:#222;letter-spacing:-0.26px;">Maillage</span>
<span class="t" style="left:276.0px;top:13.7px;font-size:9.3px;color:#f4f4f4;letter-spacing:-0.11px;">Conditions limites</span>
<span class="t" style="left:362.0px;top:13.7px;font-size:9.3px;color:#f4f4f4;letter-spacing:-0.15px;">Optimisation</span>
<span class="t" style="left:427.0px;top:13.7px;font-size:9.3px;color:#f4f4f4;letter-spacing:-0.44px;">Résultats</span>
<span class="t" style="left:478.0px;top:13.7px;font-size:9.3px;color:#f4f4f4;letter-spacing:-0.50px;">Rapports</span>
<span class="t" style="left:527.0px;top:13.7px;font-size:9.3px;color:#f4f4f4;letter-spacing:-0.34px;">Démarrer et en savoir plus</span>
<span class="t" style="left:643.0px;top:13.7px;font-size:9.3px;color:#f4f4f4;letter-spacing:-0.64px;">Ressources</span>
<span class="t" style="left:20.0px;top:42.5px;font-size:9.3px;color:#303030;letter-spacing:-0.36px;">Dual Domain</span>
<span class="t" style="left:20.0px;top:59.0px;font-size:9.3px;color:#303030;letter-spacing:-0.62px;">Densité</span>
<span class="t" style="left:90.5px;top:58.0px;font-size:9.3px;color:#303030;letter-spacing:-0.56px;">Générer</span>
<span class="t" style="left:84.5px;top:68.2px;font-size:9.3px;color:#303030;letter-spacing:-0.19px;">le maillage</span>
<span class="t" style="left:131.0px;top:58.0px;font-size:9.3px;color:#b4b4b4;letter-spacing:-0.24px;">Maillage de</span>
<span class="t" style="left:136.0px;top:68.2px;font-size:9.3px;color:#b4b4b4;letter-spacing:-0.29px;">circuit 3D</span>
<span class="t" style="left:183.0px;top:58.0px;font-size:9.3px;color:#b4b4b4;letter-spacing:-0.22px;">Maillage</span>
<span class="t" style="left:180.4px;top:68.2px;font-size:9.3px;color:#b4b4b4;letter-spacing:0.03px;">du moule</span>
<span class="t" style="left:89.0px;top:85.5px;font-size:9.3px;color:#303030;letter-spacing:-0.35px;">Maillage</span>
<span class="t" style="left:227.4px;top:58.0px;font-size:9.3px;color:#303030;letter-spacing:-0.31px;">Statistiques</span>
<span class="t" style="left:227.0px;top:68.2px;font-size:9.3px;color:#303030;letter-spacing:-0.24px;">de maillage</span>
<span class="t" style="left:293.0px;top:32.5px;font-size:9.3px;color:#b4b4b4;letter-spacing:-0.00px;">Montrer</span>
<span class="t" style="left:293.0px;top:50.5px;font-size:9.3px;color:#b4b4b4;letter-spacing:-0.44px;">Examiner</span>
<span class="t" style="left:293.0px;top:68.0px;font-size:9.3px;color:#303030;letter-spacing:-0.22px;">Rapport de forme</span>
<span class="t" style="left:385.0px;top:32.5px;font-size:9.3px;color:#303030;letter-spacing:-0.63px;">Epaisseur</span>
<span class="t" style="left:385.0px;top:50.5px;font-size:9.3px;color:#303030;letter-spacing:-0.20px;">Corrélation de maillage</span>
<span class="t" style="left:385.0px;top:68.0px;font-size:9.3px;color:#303030;letter-spacing:-0.36px;">Bords libres</span>
<span class="t" style="left:348.0px;top:85.5px;font-size:9.3px;color:#303030;letter-spacing:-0.19px;">Diagnostic du maillage</span>
<span class="t" style="left:499.5px;top:32.5px;font-size:9.3px;color:#303030;letter-spacing:-0.36px;">Chevauchements</span>
<span class="t" style="left:499.5px;top:50.5px;font-size:9.3px;color:#303030;letter-spacing:-0.15px;">Connectivité</span>
<span class="t" style="left:499.5px;top:68.0px;font-size:9.3px;color:#303030;letter-spacing:-0.19px;">Orientation</span>
<span class="t" style="left:577.0px;top:58.0px;font-size:9.3px;color:#303030;letter-spacing:-0.37px;">Assistant Réparation</span>
<span class="t" style="left:594.0px;top:68.2px;font-size:9.3px;color:#303030;letter-spacing:-0.15px;">du maillage</span>
<span class="t" style="left:678.0px;top:32.6px;font-size:9.3px;color:#303030;letter-spacing:-0.36px;">Fusionner des noeuds</span>
<span class="t" style="left:678.0px;top:50.3px;font-size:9.3px;color:#303030;letter-spacing:-0.39px;">Permuter les arêtes</span>
<span class="t" style="left:678.0px;top:68.3px;font-size:9.3px;color:#303030;letter-spacing:-0.43px;">Insérer des noeuds</span>
<span class="t" style="left:786.6px;top:32.6px;font-size:9.3px;color:#303030;letter-spacing:-0.43px;">Déplacer des noeuds</span>
<span class="t" style="left:786.6px;top:50.3px;font-size:9.3px;color:#303030;letter-spacing:-0.32px;">Aligner des noeuds</span>
<span class="t" style="left:786.6px;top:68.3px;font-size:9.3px;color:#303030;letter-spacing:-0.30px;">Fusion globale</span>
<span class="t" style="left:878.0px;top:57.5px;font-size:9.3px;color:#303030;letter-spacing:-0.15px;">Foncti</span>
<span class="t" style="left:713.7px;top:85.3px;font-size:9.3px;color:#303030;letter-spacing:-0.07px;">Modification du maillage</span>
<span class="t" style="left:6.7px;top:114.5px;font-size:9px;color:#111;letter-spacing:-0.58px;">Tâches</span>
<span class="t" style="left:42.0px;top:113.5px;font-size:9px;color:#111;letter-spacing:-0.69px;">Outils</span>
<span class="t" style="left:72.7px;top:114.7px;font-size:9px;color:#111;letter-spacing:-0.62px;">Vues partagées</span>
<span class="t" style="left:3.6px;top:133.8px;font-size:9px;color:#000;font-weight:700;letter-spacing:-0.19px;">Fusionner des noeuds</span>
<span class="t" style="left:152.0px;top:133.8px;font-size:9px;color:#000;font-weight:700;letter-spacing:-1.34px;">F5</span>
<span class="t" style="left:198.5px;top:134.5px;font-size:9px;color:#555;letter-spacing:-0.21px;">...</span>
<span class="t" style="left:32.7px;top:161.0px;font-size:9px;color:#000;letter-spacing:-0.47px;">Appliquer</span>
<span class="t" style="left:102.0px;top:161.0px;font-size:9px;color:#000;letter-spacing:-0.91px;">Fermer</span>
<span class="t" style="left:167.0px;top:161.0px;font-size:9px;color:#000;letter-spacing:-0.58px;">Aide</span>
<span class="t" style="left:146.3px;top:160.8px;font-size:11.5px;color:#1c6fd2;font-weight:700;letter-spacing:-1.43px;">?</span>
<span class="t" style="left:24.4px;top:177.7px;font-size:9px;color:#000;letter-spacing:-0.62px;">Paramètres d'entrée</span>
<span class="t" style="left:7.3px;top:194.7px;font-size:9px;color:#000;letter-spacing:-0.53px;">Noeud vers lequel fusionner:</span>
<span class="t" style="left:129.5px;top:195.0px;font-size:9px;color:#000;letter-spacing:-0.73px;">N91092</span>
<span class="t" style="left:129.5px;top:216.0px;font-size:9px;color:#000;letter-spacing:-0.73px;">N91402</span>
<span class="t" style="left:7.3px;top:233.4px;font-size:9px;color:#000;letter-spacing:-0.57px;">Nombre de noeuds sélectionnés:</span>
<span class="t" style="left:132.0px;top:233.4px;font-size:9px;color:#000;letter-spacing:-1.02px;">1</span>
<span class="t" style="left:24.0px;top:253.4px;font-size:9px;color:#000;letter-spacing:-0.50px;">Ne fusionner les noeuds que le long de l'arête d'un</span>
<span class="t" style="left:24.0px;top:263.4px;font-size:9px;color:#000;letter-spacing:-0.31px;">élément</span>
<span class="t" style="left:11.8px;top:276.2px;font-size:9px;color:#000;letter-spacing:-0.54px;">Si les noeuds sont connectés au même type d'élément,</span>
<span class="t" style="left:11.8px;top:286.0px;font-size:9px;color:#000;letter-spacing:-0.38px;">n'autoriser la fusion que si les noeuds constituent une</span>
<span class="t" style="left:11.8px;top:295.2px;font-size:9px;color:#000;letter-spacing:-0.47px;">arête d'élément.</span>
<span class="t" style="left:23.6px;top:311.5px;font-size:9px;color:#000;letter-spacing:-0.56px;">Fusionner vers le milieu</span>
<span class="t" style="left:19.0px;top:330.0px;font-size:9px;color:#000;letter-spacing:-0.53px;">Application automatique lorsque la sélection est</span>
<span class="t" style="left:19.0px;top:339.3px;font-size:9px;color:#000;letter-spacing:-0.54px;">terminée</span>
<span class="t" style="left:25.0px;top:404.7px;font-size:9px;color:#000;letter-spacing:-0.54px;">Option de sélection</span>
<span class="t" style="left:5.5px;top:419.0px;font-size:8.5px;color:#a0a0a0;letter-spacing:-0.52px;">Créer sous:</span>
<span class="t" style="left:57.7px;top:421.5px;font-size:8.5px;color:#8a8a8a;letter-spacing:-0.34px;">&lt;Aucune propriété définie&gt;</span>
<span class="t" style="left:203.0px;top:423.0px;font-size:9px;color:#999;letter-spacing:-0.21px;">...</span>
<span class="t" style="left:5.5px;top:441.8px;font-size:9px;color:#000;letter-spacing:-0.69px;">Filtre:</span>
<span class="t" style="left:57.7px;top:441.3px;font-size:9px;color:#000;letter-spacing:-0.34px;">Noeud</span>
</body></html>
